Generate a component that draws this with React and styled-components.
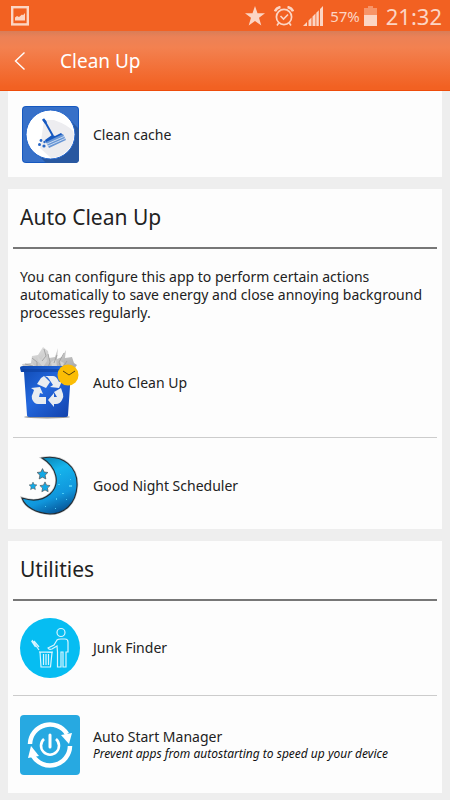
import React from 'react'
import styled, { createGlobalStyle } from 'styled-components'

function App() {
  return (
    <Page>
      <GlobalStyle />
      <StatusBar>
        <PictureIcon />
        <StatusRight>
          <StarIcon />
          <AlarmIcon />
          <SignalIcon />
          <Percent>57%</Percent>
          <BatteryIcon />
          <Clock>21:32</Clock>
        </StatusRight>
      </StatusBar>
      <Header>
        <BackButton aria-label="Back">
          <svg width="12" height="20" viewBox="0 0 12 20" fill="none" stroke="#fff" strokeWidth="1.4">
            <path d="M10.500 1.500 1.500 10l9 8.500" />
          </svg>
        </BackButton>
        <PageTitle>Clean Up</PageTitle>
      </Header>
      <Main>
        <Card>
          <Row $top={15} $bottom={14}>
            <IconBox><BroomIcon /></IconBox>
            <Label>Clean cache</Label>
          </Row>
        </Card>
        <Card>
          <CardTitle>Auto Clean Up</CardTitle>
          <Description>
            You can configure this app to perform certain actions automatically to save energy and close annoying
            background processes regularly.
          </Description>
          <Row $top={24} $bottom={17}>
            <IconBox><BinIcon /></IconBox>
            <Label>Auto Clean Up</Label>
          </Row>
          <Row $top={18} $bottom={13}>
            <IconBox><MoonIcon /></IconBox>
            <Label>Good Night Scheduler</Label>
          </Row>
        </Card>
        <Card>
          <CardTitle>Utilities</CardTitle>
          <Row $top={17} $bottom={17}>
            <IconBox><JunkIcon /></IconBox>
            <Label>Junk Finder</Label>
          </Row>
          <Row $top={19} $bottom={18}>
            <IconBox><AutoStartIcon /></IconBox>
            <Labels>
              <Label>Auto Start Manager</Label>
              <Hint>Prevent apps from autostarting to speed up your device</Hint>
            </Labels>
          </Row>
        </Card>
      </Main>
    </Page>
  )
}

function PictureIcon() {
  return (
    <svg width="18" height="20" viewBox="0 0 18 20">
      <rect x="1.2" y="1.2" width="15.6" height="17.2" fill="none" stroke="#fcd5c4" strokeWidth="2.4" />
      <path d="M4 14.500v-3l2-1.500 2 1 3-2.500 1 .8 2-2.300v7.500z" fill="#fcd5c4" />
    </svg>
  )
}

function StarIcon() {
  return (
    <svg width="20" height="20" viewBox="0 0 20 20" fill="#fcd5c4">
      <path d="m10 0 2.500 7.200H20l-6 4.600 2.300 7.700L10 15l-6.300 4.500L6 11.800 0 7.200h7.500z" />
    </svg>
  )
}

function AlarmIcon() {
  return (
    <svg width="20" height="20" viewBox="0 0 20 20" fill="none" stroke="#fcd5c4">
      <circle cx="10" cy="11" r="7.600" strokeWidth="1.700" />
      <path d="m6.500 10 3 3 4.500-4.500" strokeWidth="1.600" />
      <path d="M1 5.300A7 7 0 0 1 6.500 1M13.500 1A7 7 0 0 1 19 5.300" strokeWidth="2.400" />
      <path d="m4.700 17-1.700 2.500M15.300 17l1.700 2.500" strokeWidth="1.600" />
    </svg>
  )
}

function SignalIcon() {
  return (
    <svg width="20" height="20" viewBox="0 0 20 20" fill="#fcd5c4">
      <path d="M0 20l4-4v4zM5.500 20v-5.500l3-3v8.500zM9.500 20v-9.500l3-3V20zM13.300 20V6.700l2.500-2.500V20zM17 20V3l3-3v20z" />
    </svg>
  )
}

function BatteryIcon() {
  return (
    <svg width="13" height="20" viewBox="0 0 13 20">
      <path d="M4 0h5v2h4v8H0V2h4z" fill="#f79468" />
      <path d="M0 9h13v11H0z" fill="#fcd5c4" />
    </svg>
  )
}

function BroomIcon() {
  return (
    <svg width="57" height="57" viewBox="0 0 57 57">
      <rect width="57" height="57" rx="4" fill="#1558c0" />
      <rect x="1" y="1" width="55" height="55" rx="3" fill="#3770c8" />
      <path d="M46 12 57 23v30q0 4-4 4H24L11 44z" fill="#2958a0" />
      <circle cx="28.500" cy="28.500" r="24.500" fill="#fff" stroke="#1d61c9" />
      <path d="m22 14 10 0q14 5 19 11l1 4A24 24 0 0 1 29 52L18 42z" fill="#ededf0" />
      <path d="m22 14 9 16" stroke="#1558c0" strokeWidth="2" />
      <path d="m21 13 3 4" stroke="#1558c0" strokeWidth="2.600" />
      <path d="m23 34 7-5 3 1 6-3 2 2-17 8z" fill="#1558c0" />
      <path d="m24 36 17-8 3 6-17 8z" fill="#6795d4" />
      <path d="m25 38 17-7.500M26 40l17-7.500" stroke="#d4e2f5" strokeWidth=".9" />
      <g fill="#2867c6">
        <circle cx="19" cy="34.500" r="1.400" />
        <circle cx="22.500" cy="36" r="1.200" />
        <circle cx="17.500" cy="38.500" r="1.500" />
        <circle cx="22" cy="40" r="1.600" />
      </g>
    </svg>
  )
}

function BinIcon() {
  return (
    <svg width="60" height="74" viewBox="0 0 60 74">
      <defs>
        <linearGradient id="bin" x1="0" x2="1" y1="0" y2="1">
          <stop offset="0" stopColor="#0e47ae" />
          <stop offset=".45" stopColor="#2368de" />
          <stop offset="1" stopColor="#123fa7" />
        </linearGradient>
        <linearGradient id="paper" x1="0" x2="1" y1="0" y2="1">
          <stop offset="0" stopColor="#e9e9e9" />
          <stop offset="1" stopColor="#a6a6a6" />
        </linearGradient>
      </defs>
      <path d="M4 23 2 18l9-1 1-7 6-1 5-8 5 4 1 7 6-1 3-9-1 11 5-2 4-7-1 8 7-1 2 6 3 2-3 4z" fill="url(#paper)" />
      <path d="m17 9 4 5 4-7 2 8-4 6-5-6zM12 17l5 5-9 1zM31 16l5-3 1 8-5 1zM40 15l4 2-2 5z" fill="#d4d4d4" />
      <path d="m24 3 2 7-4 5M12 12l5 4v6M28 8l2 8-2 6M44 7l-5 9 2 6M37 9l-3 8M47 15l-4 6M5 18l8 2" fill="none" stroke="#999" strokeWidth=".8" />
      <ellipse cx="27" cy="71" rx="23" ry="1.500" fill="#555" opacity=".6" />
      <path d="M0 22q0-2 3-2h50l1 4-3 2-3 43q0 2-3 2H10q-3 0-3-2L4 26H1z" fill="url(#bin)" />
      <path d="M1 23h53v3H2z" fill="#0b3d99" opacity=".55" />
      <g fill="#e9edf1">
        <path d="m17 38 4-6 3-2 6 6-4 6z" />
        <path d="M25 30h8q3 0 5 4l1 2 3-1-3 7-9-1 3-2-4-6q-1-2-4-3z" />
        <path d="m34 46 7-4 2 6q1 3-1 6-2 4-6 4h-2v3l-6-7 6-7v4h3z" />
        <path d="M26 51v7h-8q-4 0-6-5-1-3 1-6l1-3-3-2 9-1 3 7-3-1-1 4z" />
      </g>
      <circle cx="48" cy="29" r="10.500" fill="#fbbd05" />
      <path d="m43 25 6 4 6-4" fill="none" stroke="#554010" strokeWidth="1" />
    </svg>
  )
}

const star = 'm0-6 1.800 3.800 4.200.5-3.100 3 .8 4.200L0 3.500l-3.700 2 .8-4.200-3.100-3 4.200-.5z'

function MoonIcon() {
  return (
    <svg width="60" height="60" viewBox="0 0 60 60">
      <defs>
        <linearGradient id="moon" x1=".3" x2=".7" y1="0" y2="1">
          <stop offset="0" stopColor="#087fae" />
          <stop offset=".3" stopColor="#15b4ec" />
          <stop offset=".7" stopColor="#1096dc" />
          <stop offset="1" stopColor="#064f91" />
        </linearGradient>
      </defs>
      <path d="M22 2C43-2 58 11 57 30 56 48 44 58 30 58 16 57 5 51 2 42c9 3 20 3 28-4 11-10 7-27-8-36z" fill="none" stroke="#ccc" strokeWidth="2.400" />
      <path d="M22 2C43-2 58 11 57 30 56 48 44 58 30 58 16 57 5 51 2 42c9 3 20 3 28-4 11-10 7-27-8-36z" fill="url(#moon)" stroke="#222d35" strokeWidth="1.100" />
      <g fill="#13a9e6" stroke="#555" strokeWidth=".8">
        <path d={star} transform="translate(22.500 18) scale(.9)" />
        <path d={star} transform="translate(13 30) scale(.65)" />
        <path d={star} transform="translate(25 31) scale(.85)" />
      </g>
      <g fill="#4cc9f2">
        <path d="M38 28h2v1h-2zM49 29h3v2h-3zM42 37h2v1h-2zM36 42h1v2h-1zM25 50h1v1h-1zM35 52h1v1h-1zM40 18h1v1h-1zM50 23h1v1h-1zM46 43h1v1h-1z" />
      </g>
    </svg>
  )
}

function JunkIcon() {
  return (
    <svg width="60" height="60" viewBox="0 0 60 60" fill="none" stroke="#d9f5ff" strokeWidth="1.200">
      <circle cx="30" cy="30" r="30" fill="#06bdf2" stroke="none" />
      <circle cx="41" cy="14.500" r="4" />
      <path d="M37.500 49V34l-.5-6-5 3q-3 1-4-1l6-3 3-5q1-1 4-1h4q3 0 3 3v10h-2v15h-3V34h-2v15z" />
      <path d="m20 34 12 .5-1.500 14.500H21zM19 34h14M23.500 36v11M26 36v11M28.500 36v11" />
      <path d="m12 22 7 10M14 23l5 6M11.500 23l4 6" />
    </svg>
  )
}

function AutoStartIcon() {
  return (
    <svg width="60" height="60" viewBox="0 0 60 60" fill="none" stroke="#fff">
      <rect width="60" height="60" rx="4" fill="#27a9e1" stroke="none" />
      <path d="M10 29A20 20 0 0 1 47 19" strokeWidth="4.500" />
      <path d="M50 31A20 20 0 0 1 13 41" strokeWidth="4.500" />
      <path d="m41 20 11-2-3 11z" fill="#fff" stroke="none" />
      <path d="m8 43 3-12 8 10z" fill="#fff" stroke="none" />
      <path d="M24 24a9 9 0 1 0 12 0" strokeWidth="2.600" />
      <path d="M30 20v12" strokeWidth="3" strokeLinecap="round" />
    </svg>
  )
}

const GlobalStyle = createGlobalStyle`
  * {
    box-sizing: border-box;
  }
  body {
    margin: 0;
    background: #eee;
    color: #222;
    font-family: 'Noto Sans', sans-serif;
  }
`

const Page = styled.div`
  display: flex;
  flex-direction: column;
`

const StatusBar = styled.div`
  display: flex;
  justify-content: space-between;
  align-items: center;
  height: 31px;
  padding: 0 8px 0 11px;
  background: #f26122;
  color: #fcd5c4;
`

const StatusRight = styled.div`
  display: flex;
  align-items: center;
  gap: 9px;
`

const Percent = styled.span`
  font-size: 15px;
  margin-right: -5px;
  margin-left: -2px;
`

const Clock = styled.span`
  font-size: 22px;
  line-height: 30px;
`

const Header = styled.header`
  display: flex;
  align-items: center;
  height: 60px;
  background: linear-gradient(#d87d58 0, #ec8156 10%, #f38150 28%, #f26122 95%);
  border-bottom: 1px solid #ee4c0a;
`

const BackButton = styled.button`
  display: flex;
  padding: 8px 14px;
  border: none;
  background: none;
  cursor: pointer;
`

const PageTitle = styled.h1`
  margin: 0 20px;
  font-size: 19px;
  font-weight: 400;
  color: #fff;
`

const Main = styled.main`
  display: flex;
  flex-direction: column;
  gap: 12px;
  padding: 0 8px 8px;
`

const Card = styled.section`
  padding: 0 5px;
  background: #fdfdfd;
`

const CardTitle = styled.h2`
  margin: 0;
  padding: 12px 7px 14px;
  border-bottom: 2px solid #777;
  font-size: 21px;
  line-height: 32px;
  font-weight: 400;
`

const Description = styled.p`
  margin: 0;
  padding: 19px 4px 0 7px;
  font-size: 14px;
  line-height: 18px;
`

const Row = styled.button`
  display: flex;
  align-items: center;
  gap: 13px;
  width: 100%;
  padding: ${({ $top, $bottom }) => `${$top}px 7px ${$bottom}px`};
  border: none;
  background: none;
  color: inherit;
  font-family: inherit;
  text-align: left;
  cursor: pointer;

  & + & {
    border-top: 1px solid #ccc;
  }
`

const IconBox = styled.span`
  display: flex;
  justify-content: center;
  flex: 0 0 60px;
`

const Labels = styled.span`
  display: flex;
  flex-direction: column;
`

const Label = styled.span`
  font-size: 14px;
  line-height: 18px;
`

const Hint = styled.em`
  font-size: 12px;
  line-height: 16px;
  color: #111;
`

export default App
